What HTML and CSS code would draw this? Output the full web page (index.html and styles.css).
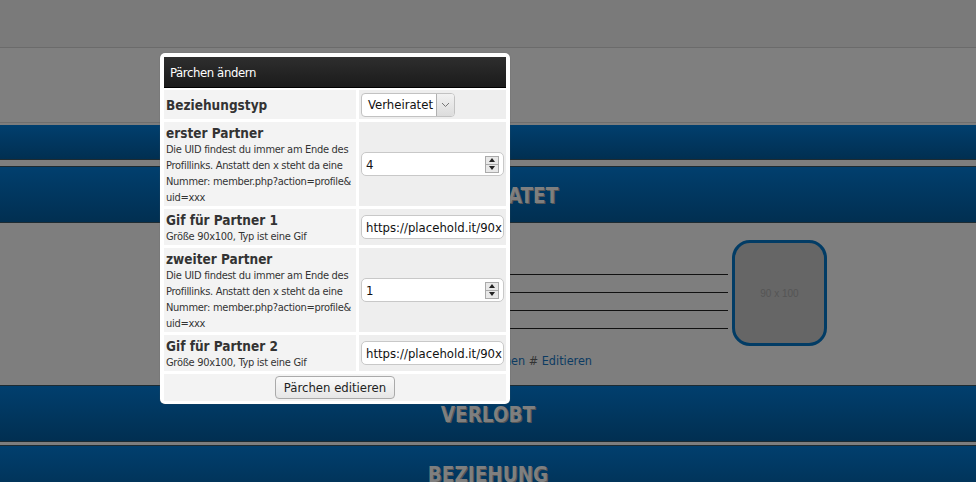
FILE: index.html
```html
<!DOCTYPE html>
<html>
<head>
<meta charset="utf-8">
<link rel="stylesheet" href="styles.css">
</head>
<body>
<div class="page">
  <div class="top1"></div>
  <div class="top2"></div>
  <div class="band band-short"></div>
  <div class="gap"></div>
  <div class="band"><span class="band-title">VERHEIRATET</span></div>
  <div class="content">
    <div class="info">
      <div class="lines">
        <div class="line"></div>
        <div class="line"></div>
        <div class="line"></div>
        <div class="line"></div>
      </div>
      <div class="actions"><a class="lnk">Löschen</a> # <a class="lnk">Editieren</a></div>
    </div>
    <div class="avatar">90 x 100</div>
  </div>
  <div class="band"><span class="band-title">VERLOBT</span></div>
  <div class="gap small"></div>
  <div class="band"><span class="band-title">BEZIEHUNG</span></div>
</div>

<div class="dialog">
  <div class="dlg-head">Pärchen ändern</div>
  <div class="rows">
    <div class="row">
      <div class="lab r1"><b>Beziehungstyp</b></div>
      <div class="val">
        <div class="select"><span class="sel-text">Verheiratet</span><span class="sel-btn"><svg width="9" height="6" viewBox="0 0 9 6"><path d="M1 1l3.5 3.5L8 1" fill="none" stroke="#777" stroke-width="1"/></svg></span></div>
      </div>
    </div>
    <div class="row">
      <div class="lab"><b>erster Partner</b><div class="desc">Die UID findest du immer am Ende des Profillinks. Anstatt den x steht da eine Nummer: member.php?action=profile&amp; uid=xxx</div></div>
      <div class="val"><div class="num"><span>4</span><span class="spin"><i class="up"></i><i class="dn"></i></span></div></div>
    </div>
    <div class="row">
      <div class="lab"><b>Gif für Partner 1</b><div class="desc">Größe 90x100, Typ ist eine Gif</div></div>
      <div class="val"><div class="txt">https://placehold.it/90x100</div></div>
    </div>
    <div class="row">
      <div class="lab"><b>zweiter Partner</b><div class="desc">Die UID findest du immer am Ende des Profillinks. Anstatt den x steht da eine Nummer: member.php?action=profile&amp; uid=xxx</div></div>
      <div class="val"><div class="num"><span>1</span><span class="spin"><i class="up"></i><i class="dn"></i></span></div></div>
    </div>
    <div class="row">
      <div class="lab"><b>Gif für Partner 2</b><div class="desc">Größe 90x100, Typ ist eine Gif</div></div>
      <div class="val"><div class="txt">https://placehold.it/90x100</div></div>
    </div>
    <div class="foot"><span class="btn">Pärchen editieren</span></div>
  </div>
</div>
</body>
</html>
```
FILE: styles.css
```css
html, body { margin: 0; padding: 0; }
body {
  width: 976px; height: 482px; overflow: hidden;
  background: #7d7d7d;
  font-family: "DejaVu Sans Condensed", "DejaVu Sans", sans-serif;
  position: relative;
}
.page { display: flex; flex-direction: column; }
.top1 { height: 47px; background: #7a7a7a; border-bottom: 1px solid #6b6b6b; }
.top2 { height: 74px; background: #7f7f7f; border-bottom: 1px solid #6e6e6e; margin-bottom: 2px; }
.band {
  height: 55px;
  background: linear-gradient(#013f6e, #012f51);
  border-top: 1px solid #1d2b32; border-bottom: 1px solid #1d2b32;
  display: flex; align-items: center; justify-content: center;
  flex-shrink: 0;
}
.band-short { height: 34px; border-top: 0; }
.gap { height: 6px; background: #7e7e7e; }
.gap.small { height: 3px; }
.band-title {
  font-family: "DejaVu Sans Condensed", "DejaVu Sans", sans-serif;
  font-weight: bold; font-size: 20.5px; color: #7f7f7f;
  text-shadow: 1px 1px 0 #555;
  padding-top: 2px;
}
.content { height: 162px; display: flex; background: #7e7e7e; }
.info { margin-left: 240px; width: 488px; padding-top: 51px; }
.lines { display: flex; flex-direction: column; }
.line { height: 17px; border-bottom: 1px solid #111; }
.line:first-child { height: 0; }
.actions { margin-top: 24px; font-size: 12.5px; color: #333; text-align: right; padding-right: 136px; }
.lnk { color: #0c3b62; }
.avatar {
  margin-left: 4px; margin-top: 17px;
  width: 89px; height: 100px;
  border: 3px solid #023c65; border-radius: 18px;
  background: #666;
  display: flex; align-items: center; justify-content: center;
  font-family: "Liberation Sans", sans-serif; font-size: 10px; color: #555;
}

.dialog {
  position: absolute; left: 160px; top: 53px;
  width: 342px; height: 343px;
  padding: 4px; overflow: hidden;
  background: #fff; border-radius: 5px;
  box-shadow: 0 0 1px #555;
}
.dlg-head {
  height: 31px; box-sizing: border-box;
  background: linear-gradient(#2e2e2e, #1b1b1b);
  border-bottom: 1px solid #000;
  color: #fff; font-size: 13px; line-height: 31px; padding-left: 6px;
  letter-spacing: -0.4px;
}
.rows { display: flex; flex-direction: column; gap: 3px; margin-top: 2px; }
.row { display: flex; gap: 3px; }
.lab {
  width: 190px; background: #f3f3f3; padding: 3px 0 0 2px;
  color: #333; font-size: 13px; line-height: 16px;
}
.lab.r1 { display: flex; align-items: center; height: 26px; padding: 2px 0 1px 2px; }
.lab b { display: block; font-size: 13.5px; line-height: 17px; color: #333; }
.desc { font-size: 11px; line-height: 16px; color: #333; letter-spacing: -0.3px; }
.val { flex: 1; background: #eeeeee; display: flex; align-items: center; padding-left: 2px; }
.select {
  width: 94px; height: 24px; box-sizing: border-box;
  border: 1px solid #c2c2c2; border-radius: 4px; background: #fff;
  display: flex; align-items: center; font-size: 13px; color: #111;
}
.sel-text { padding-left: 6px; flex: 1; }
.sel-btn { width: 17px; height: 22px; border-left: 1px solid #b0b0b0; background: linear-gradient(#f2f2f2, #dcdcdc); border-radius: 0 3px 3px 0; display: flex; align-items: center; justify-content: center; }
.num, .txt {
  width: 143px; height: 24px; box-sizing: border-box;
  border: 1px solid #c8c8c8; border-radius: 5px; background: #fff;
  display: flex; align-items: center; font-size: 13px; color: #111; padding-left: 4px;
  overflow: hidden; white-space: nowrap;
}
.num span:first-child { flex: 1; }
.spin { width: 12px; height: 15px; margin-right: 4px; border: 1px solid #aaa; background: #e8e8e8; display: flex; flex-direction: column; }
.spin i { flex: 1; display: flex; align-items: center; justify-content: center; }
.spin i::before { content: ""; border-left: 3px solid transparent; border-right: 3px solid transparent; }
.spin .up::before { border-bottom: 4px solid #222; }
.spin .dn { border-top: 1px solid #aaa; }
.spin .dn::before { border-top: 4px solid #222; }
.foot { background: #f3f3f3; height: 27px; display: flex; align-items: center; justify-content: center; }
.btn {
  font-size: 13px; color: #222; border: 1px solid #aaa; border-radius: 4px;
  background: linear-gradient(#fafafa, #e6e6e6); padding: 2px 8px; height: 17px; line-height: 17px;
}
```
